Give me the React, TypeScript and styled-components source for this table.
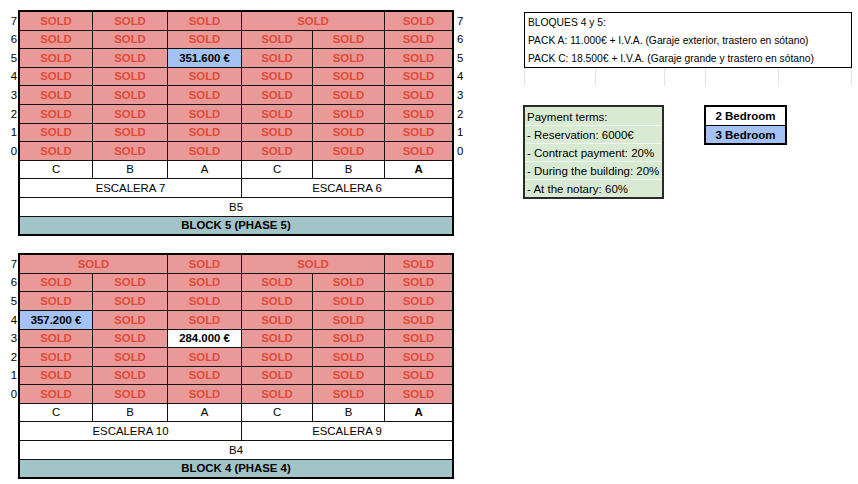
import React from "react";
import styled, { createGlobalStyle, css } from "styled-components";

const GlobalStyle = createGlobalStyle`
  html, body { margin: 0; padding: 0; background: #ffffff; }
  body { font-family: "Liberation Sans", Arial, sans-serif; color: #000; }
`;

type Kind = "sold" | "blue" | "white" | "label" | "teal";

interface CellData {
  text: string;
  kind: Kind;
  span?: number;
  bold?: boolean;
}

const ROW_H = "17.6px";

const Page = styled.div`
  display: flex;
  align-items: flex-start;
  padding-top: 10px;
`;

const LeftCol = styled.div`
  display: flex;
  flex-direction: column;
  gap: 17px;
`;

const Block = styled.div`
  display: flex;
  align-items: flex-start;
`;

const FloorLabels = styled.div<{ $side: "left" | "right" }>`
  display: grid;
  grid-auto-rows: ${ROW_H};
  row-gap: 1px;
  padding-top: 2px;
  width: ${(p) => (p.$side === "left" ? "18px" : "16px")};
  box-sizing: border-box;
  font-size: 11.4px;
  ${(p) =>
    p.$side === "left"
      ? css`
          text-align: right;
          padding-right: 1px;
        `
      : css`
          text-align: left;
          padding-left: 3px;
        `}
`;

const FloorNum = styled.div<{ $side: "left" | "right" }>`
  display: flex;
  align-items: center;
  justify-content: ${(p) => (p.$side === "left" ? "flex-end" : "flex-start")};
  line-height: 1;
  padding-top: 1px;
`;

const Table = styled.div`
  display: grid;
  grid-template-columns: 72px 74px 73px 70px 71px 67px;
  grid-auto-rows: ${ROW_H};
  gap: 1px;
  background: #111;
  border: 2px solid #000;
`;

const bgFor: Record<Kind, string> = {
  sold: "#ea9999",
  blue: "#a4c2f4",
  white: "#ffffff",
  label: "#ffffff",
  teal: "#a2c4c9",
};

const Cell = styled.div<{ $kind: Kind; $span: number; $bold: boolean }>`
  grid-column: span ${(p) => p.$span};
  background: ${(p) => bgFor[p.$kind]};
  display: flex;
  align-items: center;
  justify-content: center;
  padding-top: 1px;
  font-size: 11.4px;
  line-height: 1;
  white-space: nowrap;
  color: ${(p) => (p.$kind === "sold" ? "#e14b38" : "#000")};
  font-weight: ${(p) => (p.$bold ? 700 : 400)};
`;

const RightCol = styled.div`
  display: flex;
  flex-direction: column;
  margin-left: 53px;
  padding-top: 2px;
`;

const InfoBox = styled.div`
  margin-left: 1px;
  width: 328px;
  box-sizing: border-box;
  border: 1px solid #000;
  display: grid;
  grid-auto-rows: 18px;
`;

const InfoLine = styled.div`
  display: flex;
  align-items: center;
  padding-left: 3px;
  padding-top: 1px;
  font-size: 10.3px;
  white-space: nowrap;
`;

const FaintGrid = styled.div`
  margin-left: 1px;
  display: grid;
  grid-template-columns: 71px 69px 41px 73px 74px;
  height: 18px;
`;

const FaintCell = styled.div`
  border-left: 1px solid #e3e3e3;
  &:last-child {
    border-right: 1px solid #e3e3e3;
  }
`;

const BottomRow = styled.div`
  display: flex;
  align-items: flex-start;
  gap: 40px;
  margin-top: 19px;
`;

const Payment = styled.div`
  width: 141px;
  box-sizing: border-box;
  border: 2px solid #2a2a2a;
  background: #d9ead3;
  display: flex;
  flex-direction: column;
`;

const PayLine = styled.div`
  height: 18px;
  box-sizing: border-box;
  display: flex;
  align-items: center;
  padding-left: 2px;
  padding-top: 1px;
  font-size: 11.5px;
  white-space: nowrap;
  & + & {
    border-top: 1px solid #eef5ec;
  }
`;

const Legend = styled.div`
  width: 83px;
  box-sizing: border-box;
  border: 2px solid #000;
  display: flex;
  flex-direction: column;
`;

const LegendItem = styled.div<{ $bg: string }>`
  height: 17.5px;
  box-sizing: border-box;
  background: ${(p) => p.$bg};
  display: flex;
  align-items: center;
  justify-content: center;
  padding-top: 1px;
  font-size: 11.5px;
  font-weight: 700;
  & + & {
    border-top: 1px solid #000;
    height: 18px;
  }
`;

const S: CellData = { text: "SOLD", kind: "sold", bold: true };
const S2: CellData = { text: "SOLD", kind: "sold", bold: true, span: 2 };
const ALL_SOLD = [S, S, S, S, S, S];

const footer = (esc1: string, esc2: string, b: string, block: string): CellData[][] => [
  [
    { text: "C", kind: "label" },
    { text: "B", kind: "label" },
    { text: "A", kind: "label" },
    { text: "C", kind: "label" },
    { text: "B", kind: "label" },
    { text: "A", kind: "label", bold: true },
  ],
  [
    { text: esc1, kind: "label", span: 3 },
    { text: esc2, kind: "label", span: 3 },
  ],
  [{ text: b, kind: "label", span: 6 }],
  [{ text: block, kind: "teal", span: 6, bold: true }],
];

const block5: CellData[][] = [
  [S, S, S, S2, S],
  ALL_SOLD,
  [S, S, { text: "351.600 €", kind: "blue", bold: true }, S, S, S],
  ALL_SOLD,
  ALL_SOLD,
  ALL_SOLD,
  ALL_SOLD,
  ALL_SOLD,
  ...footer("ESCALERA 7", "ESCALERA 6", "B5", "BLOCK 5 (PHASE 5)"),
];

const block4: CellData[][] = [
  [S2, S, S2, S],
  ALL_SOLD,
  ALL_SOLD,
  [{ text: "357.200 €", kind: "blue", bold: true }, S, S, S, S, S],
  [S, S, { text: "284.000 €", kind: "white", bold: true }, S, S, S],
  ALL_SOLD,
  ALL_SOLD,
  ALL_SOLD,
  ...footer("ESCALERA 10", "ESCALERA 9", "B4", "BLOCK 4 (PHASE 4)"),
];

const FLOORS = ["7", "6", "5", "4", "3", "2", "1", "0"];

function BlockTable({ rows, rightLabels }: { rows: CellData[][]; rightLabels: boolean }) {
  return (
    <Block>
      <FloorLabels $side="left">
        {FLOORS.map((f) => (
          <FloorNum key={f} $side="left">
            {f}
          </FloorNum>
        ))}
      </FloorLabels>
      <Table>
        {rows.map((row, ri) =>
          row.map((c, ci) => (
            <Cell key={`${ri}-${ci}`} $kind={c.kind} $span={c.span ?? 1} $bold={!!c.bold}>
              {c.text}
            </Cell>
          ))
        )}
      </Table>
      <FloorLabels $side="right">
        {rightLabels &&
          FLOORS.map((f) => (
            <FloorNum key={f} $side="right">
              {f}
            </FloorNum>
          ))}
      </FloorLabels>
    </Block>
  );
}

export default function App() {
  return (
    <>
      <GlobalStyle />
      <Page>
        <LeftCol>
          <BlockTable rows={block5} rightLabels />
          <BlockTable rows={block4} rightLabels={false} />
        </LeftCol>
        <RightCol>
          <InfoBox>
            <InfoLine>BLOQUES 4 y 5:</InfoLine>
            <InfoLine>PACK A: 11.000€ + I.V.A. (Garaje exterior, trastero en sótano)</InfoLine>
            <InfoLine>PACK C: 18.500€ + I.V.A. (Garaje grande y trastero en sótano)</InfoLine>
          </InfoBox>
          <FaintGrid>
            <FaintCell />
            <FaintCell />
            <FaintCell />
            <FaintCell />
            <FaintCell />
          </FaintGrid>
          <BottomRow>
            <Payment>
              <PayLine>Payment terms:</PayLine>
              <PayLine>- Reservation: 6000€</PayLine>
              <PayLine>- Contract payment: 20%</PayLine>
              <PayLine>- During the building: 20%</PayLine>
              <PayLine>- At the notary: 60%</PayLine>
            </Payment>
            <Legend>
              <LegendItem $bg="#ffffff">2 Bedroom</LegendItem>
              <LegendItem $bg="#a4c2f4">3 Bedroom</LegendItem>
            </Legend>
          </BottomRow>
        </RightCol>
      </Page>
    </>
  );
}
